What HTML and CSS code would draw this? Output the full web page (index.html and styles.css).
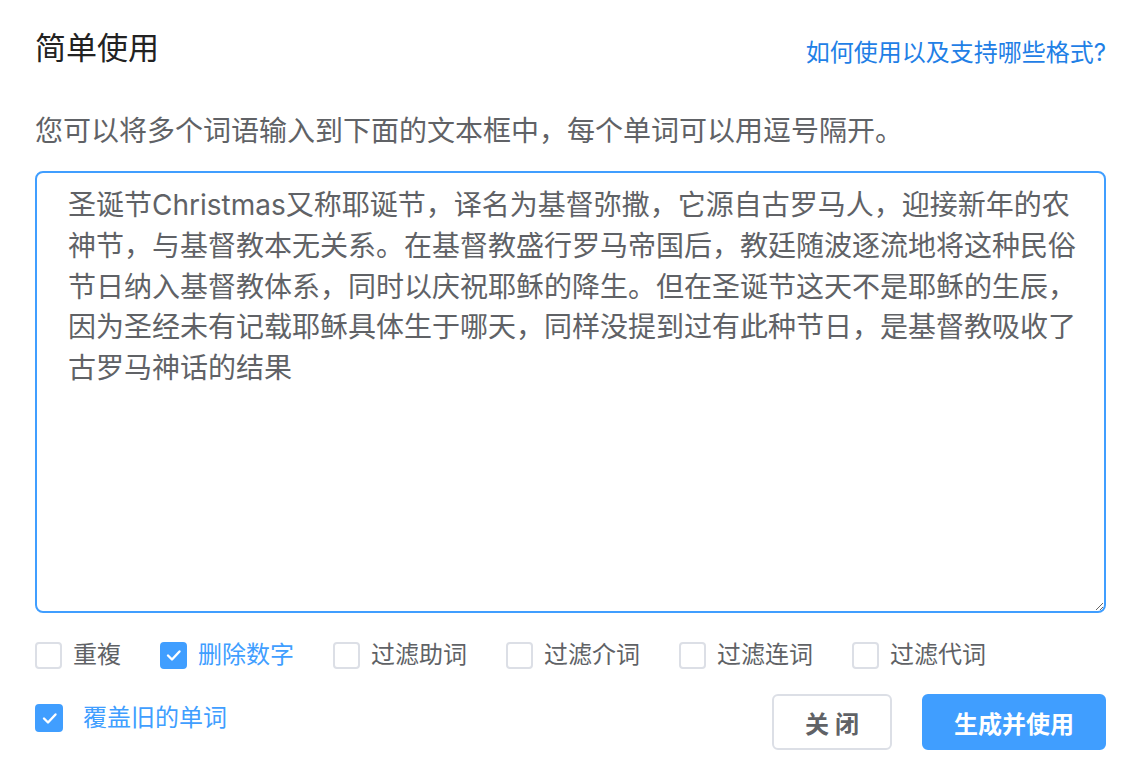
FILE: index.html
```html
<!DOCTYPE html>
<html lang="zh-CN">
<head>
    <meta charset="UTF-8">
    <meta name="viewport" content="width=device-width, initial-scale=1.0">
    <title>简单使用</title>
    <link rel="stylesheet" href="styles.css">
</head>
<body>
    <main class="dialog">
        <div class="dialog-header">
            <span class="dialog-title">简单使用</span>
            <a class="help-link" href="#">如何使用以及支持哪些格式?</a>
        </div>
        <p class="tip">您可以将多个词语输入到下面的文本框中，每个单词可以用逗号隔开。</p>
        <textarea class="words-input" spellcheck="false">圣诞节Christmas又称耶诞节，译名为基督弥撒，它源自古罗马人，迎接新年的农神节，与基督教本无关系。在基督教盛行罗马帝国后，教廷随波逐流地将这种民俗节日纳入基督教体系，同时以庆祝耶稣的降生。但在圣诞节这天不是耶稣的生辰，因为圣经未有记载耶稣具体生于哪天，同样没提到过有此种节日，是基督教吸收了古罗马神话的结果</textarea>

        <div class="options">
            <label class="check"><span class="box"></span><span class="check-label">重複</span></label>
            <label class="check is-checked"><span class="box"><svg viewBox="0 0 27 27"><path d="M8 13.5l4 4 7.5-8"/></svg></span><span class="check-label">删除数字</span></label>
            <label class="check"><span class="box"></span><span class="check-label">过滤助词</span></label>
            <label class="check"><span class="box"></span><span class="check-label">过滤介词</span></label>
            <label class="check"><span class="box"></span><span class="check-label">过滤连词</span></label>
            <label class="check"><span class="box"></span><span class="check-label">过滤代词</span></label>
        </div>

        <div class="dialog-footer">
            <label class="check check-wide is-checked"><span class="box"><svg viewBox="0 0 27 27"><path d="M8 13.5l4 4 7.5-8"/></svg></span><span class="check-label">覆盖旧的单词</span></label>
            <div class="buttons">
                <button class="btn btn-plain">关 闭</button>
                <button class="btn btn-primary">生成并使用</button>
            </div>
        </div>
    </main>
</body>
</html>
```

FILE: styles.css
```css
html, body {
    margin: 0;
    padding: 0;
    background-color: #fff;
}

body {
    font-family: Inter, "Noto Sans CJK SC", sans-serif;
    color: #606266;
}

.dialog {
    padding: 28px 34px 0 35px;
}

.dialog-header {
    display: flex;
    justify-content: space-between;
    align-items: flex-end;
    height: 40px;
}

.dialog-title {
    font-size: 31px;
    line-height: 40px;
    color: #222;
}

.help-link {
    font-size: 24px;
    line-height: 30px;
    color: #1f80e6;
    text-decoration: none;
}

.tip {
    margin: 43px 0 0;
    font-size: 28px;
    line-height: 40px;
}

.words-input {
    display: block;
    box-sizing: border-box;
    width: 100%;
    height: 442px;
    margin-top: 20px;
    padding: 12px 24px 0 31px;
    border: 2px solid #409eff;
    border-radius: 8px;
    outline: none;
    resize: vertical;
    font-family: Inter, "Noto Sans CJK SC", sans-serif;
    font-size: 28px;
    line-height: 40.75px;
    color: #606266;
}

.options {
    display: flex;
    align-items: center;
    height: 40px;
    margin-top: 22px;
}

.check {
    display: flex;
    align-items: center;
    margin-right: 39px;
    cursor: pointer;
}

.box {
    box-sizing: border-box;
    display: flex;
    justify-content: center;
    align-items: center;
    width: 27px;
    height: 27px;
    border: 2px solid #dcdfe6;
    border-radius: 4px;
    background-color: #fff;
}

.box svg {
    width: 27px;
    height: 27px;
    flex: none;
}

.box path {
    fill: none;
    stroke: #fff;
    stroke-width: 2.4;
    stroke-linecap: round;
    stroke-linejoin: round;
}

.check-label {
    margin-left: 11px;
    font-size: 24px;
    line-height: 32px;
}

.is-checked .box {
    background-color: #409eff;
    border-color: #409eff;
}

.is-checked .check-label {
    color: #409eff;
}

.check-wide {
    margin-bottom: 8px;
}

.check-wide .box {
    width: 28px;
    height: 28px;
}

.check-wide .check-label {
    margin-left: 20px;
}

.dialog-footer {
    display: flex;
    justify-content: space-between;
    align-items: center;
    margin-top: 19px;
}

.buttons {
    display: flex;
    gap: 30px;
}

.btn {
    box-sizing: border-box;
    height: 56px;
    padding: 0 30px;
    border: 2px solid #dcdfe6;
    border-radius: 6px;
    background-color: #fff;
    font-family: Inter, "Noto Sans CJK SC", sans-serif;
    font-size: 24px;
    font-weight: 600;
    color: #606266;
    cursor: pointer;
}

.btn-plain {
    width: 120px;
}

.btn-primary {
    width: 184px;
    border-color: #409eff;
    background-color: #409eff;
    color: #fff;
}
```
